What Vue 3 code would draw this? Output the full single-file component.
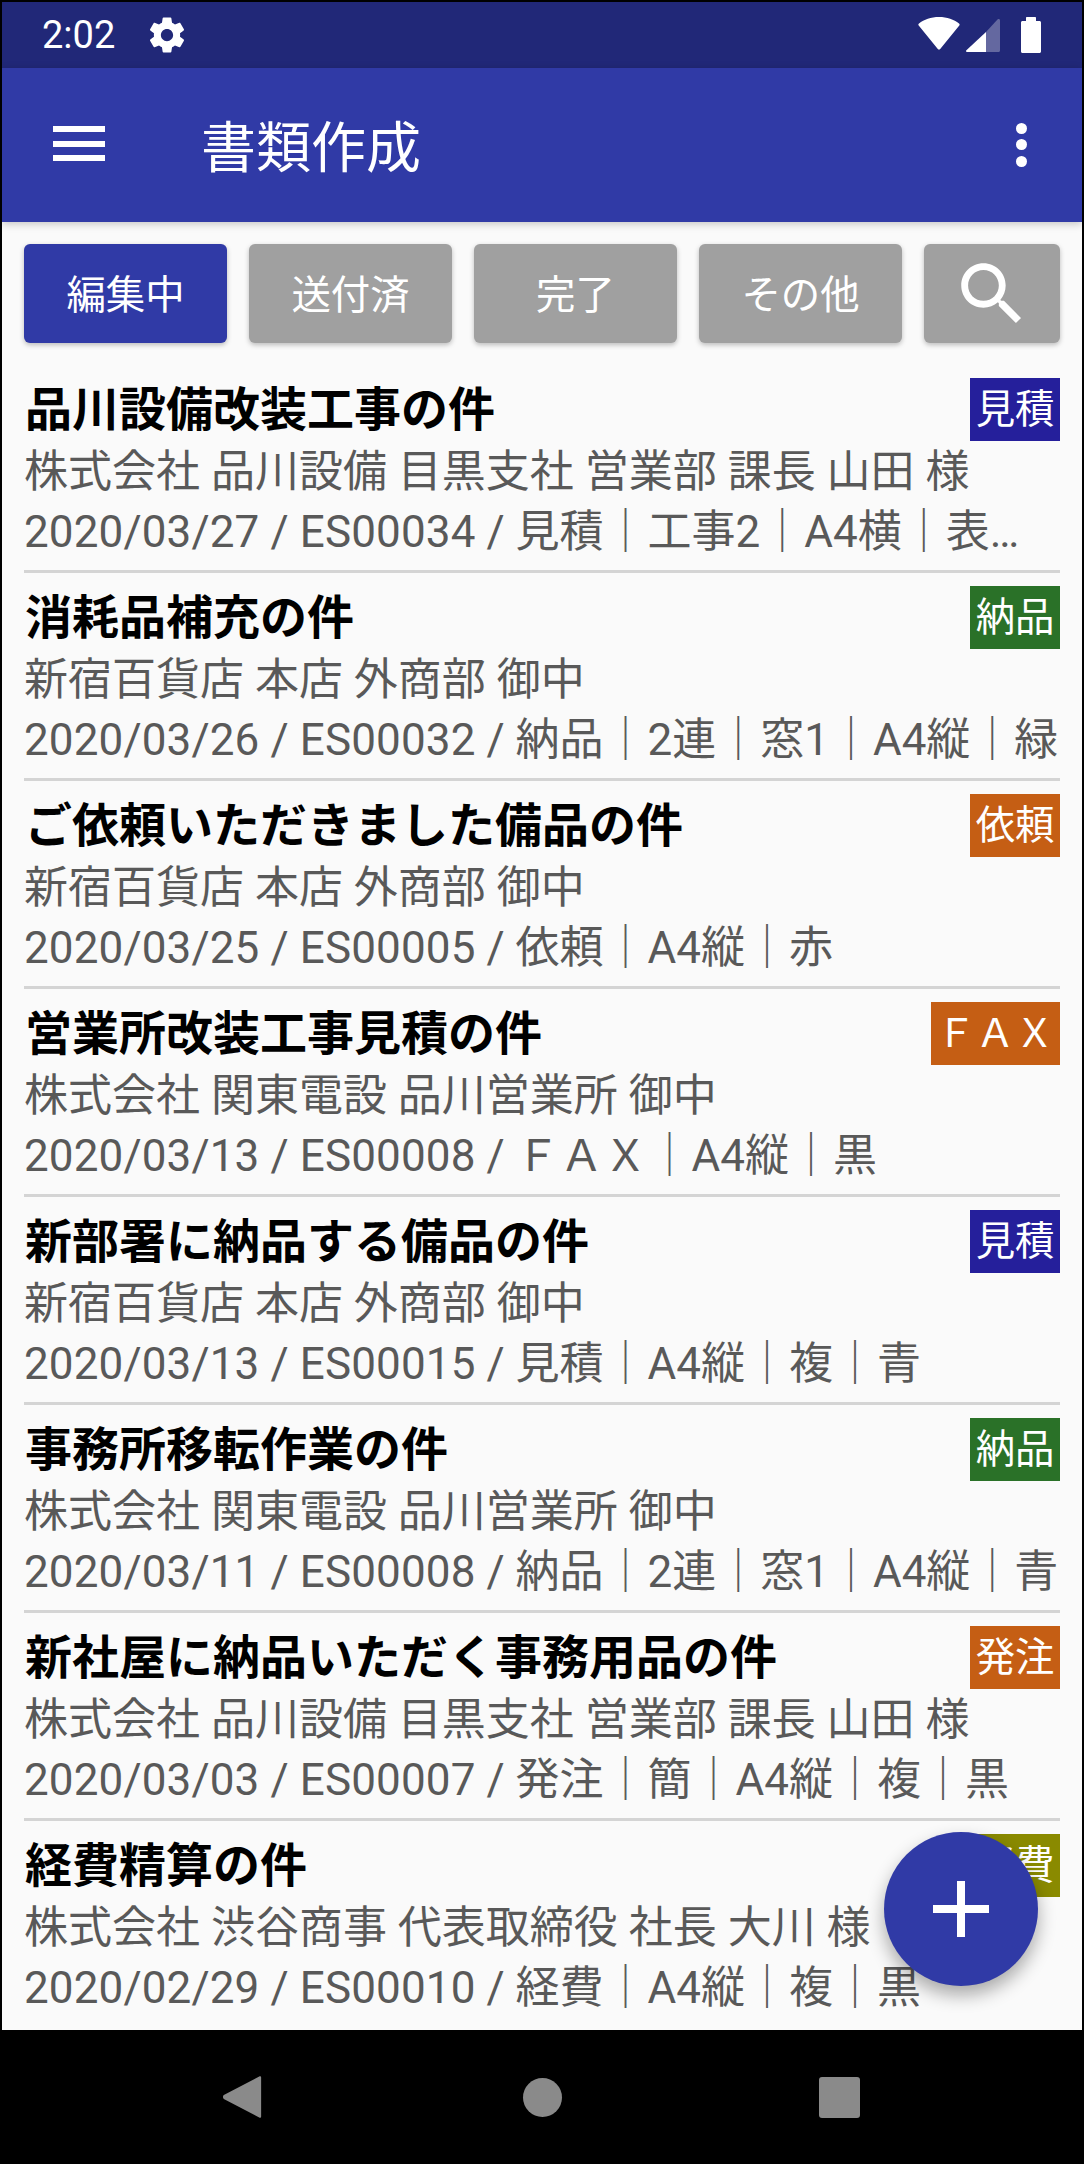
<template>
  <div class="screen">
    <div class="status-bar">
      <span class="time">2:02</span>
      <svg class="gear" viewBox="0 0 24 24"><path fill="#fff" d="M19.43 12.98c.04-.32.07-.64.07-.98s-.03-.66-.07-.98l2.11-1.65c.19-.15.24-.42.12-.64l-2-3.46c-.12-.22-.39-.3-.61-.22l-2.49 1c-.52-.4-1.08-.73-1.69-.98l-.38-2.65C14.46 2.18 14.25 2 14 2h-4c-.25 0-.46.18-.49.42l-.38 2.65c-.61.25-1.17.59-1.69.98l-2.49-1c-.23-.09-.49 0-.61.22l-2 3.46c-.13.22-.07.49.12.64l2.11 1.65c-.04.32-.07.65-.07.98s.03.66.07.98l-2.11 1.65c-.19.15-.24.42-.12.64l2 3.46c.12.22.39.3.61.22l2.49-1c.52.4 1.08.73 1.69.98l.38 2.65c.03.24.24.42.49.42h4c.25 0 .46-.18.49-.42l.38-2.65c.61-.25 1.17-.59 1.69-.98l2.49 1c.23.09.49 0 .61-.22l2-3.46c.12-.22.07-.49-.12-.64l-2.11-1.65zM12 15.5c-1.93 0-3.5-1.57-3.5-3.5s1.57-3.5 3.5-3.5 3.5 1.57 3.5 3.5-1.57 3.5-3.5 3.5z"/></svg>
      <span class="spacer"></span>
      <svg class="wifi" viewBox="0 0 42 33"><path fill="#fff" d="M21 0C13 0 6 2.5 1 6.500c-.8.6-.8 1.400-.3 2.100L19.800 32c.6.7 1.800.7 2.400 0L41.300 8.600c.5-.7.5-1.500-.3-2.100C36 2.500 29 0 21 0z"/></svg>
      <svg class="signal" viewBox="0 0 34 34"><path fill="#fff" fill-opacity="0.3" d="M20 14 31.500 1.500c1-.9 2.500-.5 2.500 1V32.500c0 .8-.6 1.500-1.500 1.500H20z"/><path fill="#fff" d="M20 14V34H1.200c-1 0-1.500-1.100-.8-1.800z"/></svg>
      <svg class="battery" viewBox="0 0 20 36"><path fill="#fff" d="M6 0h8c.6 0 1 .4 1 1v3h3.500c.8 0 1.500.7 1.500 1.500v29c0 .8-.7 1.500-1.500 1.500H1.500C.7 36 0 35.300 0 34.500v-29C0 4.700.7 4 1.500 4H5V1c0-.6.4-1 1-1z"/></svg>
    </div>

    <div class="app-bar">
      <div class="menu-icon"><i></i><i></i><i></i></div>
      <h1>書類作成</h1>
      <span class="spacer"></span>
      <div class="more-icon"><i></i><i></i><i></i></div>
    </div>

    <div class="content">
      <div class="tabs">
        <button v-for="t in tabs" :key="t" class="tab" :class="{ active: t === '編集中' }">{{ t }}</button>
        <button class="tab search">
          <svg viewBox="0 0 24 24"><path fill="#fff" d="M15.500 14h-.79l-.28-.27C15.410 12.590 16 11.110 16 9.500 16 5.910 13.090 3 9.500 3S3 5.910 3 9.500 5.910 16 9.500 16c1.610 0 3.090-.59 4.230-1.570l.27.28v.79l5 4.990L20.490 19l-4.990-5zm-6 0C7.010 14 5 11.990 5 9.500S7.010 5 9.500 5 14 7.010 14 9.500 11.990 14 9.500 14z"/></svg>
        </button>
      </div>

      <div class="list">
        <div v-for="(doc, i) in docs" :key="i" class="doc">
          <div class="doc-head">
            <div class="doc-title">{{ doc.title }}</div>
            <span class="badge" :class="doc.color">{{ doc.badge }}</span>
          </div>
          <div class="doc-to">{{ doc.to }}</div>
          <div class="doc-meta"><span class="doc-no">{{ doc.no }}</span> / {{ doc.meta }}</div>
        </div>
      </div>

      <button class="fab">
        <svg viewBox="0 0 24 24"><path fill="#fff" d="M19 13h-6v6h-2v-6H5v-2h6V5h2v6h6v2z"/></svg>
      </button>
    </div>

    <div class="nav-bar">
      <svg class="nav-back" viewBox="0 0 40 46"><path fill="#8a8a8a" d="M38 1.500c1-.6 2 0 2 1.200v40.600c0 1.200-1 1.800-2 1.200L1 25c-1.200-.8-1.200-3.200 0-4z"/></svg>
      <span class="nav-home"></span>
      <span class="nav-recent"></span>
    </div>
  </div>
</template>

<script setup>
const tabs = ['編集中', '送付済', '完了', 'その他']

const docs = [
  { title: '品川設備改装工事の件', badge: '見積', color: 'navy', to: '株式会社 品川設備 目黒支社 営業部 課長 山田 様', no: '2020/03/27 / ES00034', meta: '見積｜工事2｜A4横｜表…' },
  { title: '消耗品補充の件', badge: '納品', color: 'green', to: '新宿百貨店 本店 外商部 御中', no: '2020/03/26 / ES00032', meta: '納品｜2連｜窓1｜A4縦｜緑' },
  { title: 'ご依頼いただきました備品の件', badge: '依頼', color: 'orange', to: '新宿百貨店 本店 外商部 御中', no: '2020/03/25 / ES00005', meta: '依頼｜A4縦｜赤' },
  { title: '営業所改装工事見積の件', badge: 'ＦＡＸ', color: 'orange', to: '株式会社 関東電設 品川営業所 御中', no: '2020/03/13 / ES00008', meta: 'ＦＡＸ｜A4縦｜黒' },
  { title: '新部署に納品する備品の件', badge: '見積', color: 'navy', to: '新宿百貨店 本店 外商部 御中', no: '2020/03/13 / ES00015', meta: '見積｜A4縦｜複｜青' },
  { title: '事務所移転作業の件', badge: '納品', color: 'green', to: '株式会社 関東電設 品川営業所 御中', no: '2020/03/11 / ES00008', meta: '納品｜2連｜窓1｜A4縦｜青' },
  { title: '新社屋に納品いただく事務用品の件', badge: '発注', color: 'orange', to: '株式会社 品川設備 目黒支社 営業部 課長 山田 様', no: '2020/03/03 / ES00007', meta: '発注｜簡｜A4縦｜複｜黒' },
  { title: '経費精算の件', badge: '経費', color: 'olive', to: '株式会社 渋谷商事 代表取締役 社長 大川 様', no: '2020/02/29 / ES00010', meta: '経費｜A4縦｜複｜黒' },
]
</script>

<style>
html, body {
  margin: 0;
  background: #000;
}
</style>

<style scoped>
.screen {
  width: 1084px;
  height: 2164px;
  box-sizing: border-box;
  padding: 2px 2px 0;
  background: #000;
  display: flex;
  flex-direction: column;
  font-family: Roboto, "Noto Sans CJK JP", sans-serif;
  overflow: hidden;
}

.spacer {
  flex: 1;
}

.status-bar {
  height: 66px;
  background: #212878;
  display: flex;
  align-items: center;
  color: #fff;
  flex-shrink: 0;
}

.time {
  margin-left: 40px;
  font-size: 38px;
  line-height: 66px;
}

.gear {
  width: 42px;
  height: 42px;
  margin-left: 31px;
}

.wifi {
  width: 42px;
  height: 33px;
  margin-right: 6px;
  margin-bottom: 4px;
}

.signal {
  width: 34px;
  height: 34px;
  margin-right: 21px;
}

.battery {
  width: 20px;
  height: 36px;
  margin-right: 41px;
}

.app-bar {
  height: 154px;
  background: #303aa6;
  display: flex;
  align-items: center;
  color: #fff;
  flex-shrink: 0;
  position: relative;
  z-index: 1;
  box-shadow: 0 2px 8px rgba(0, 0, 0, 0.22);
}

.menu-icon {
  width: 52px;
  margin-left: 51px;
  margin-bottom: 3px;
  display: flex;
  flex-direction: column;
  gap: 8.5px;
}

.menu-icon i {
  height: 6px;
  background: #fff;
}

h1 {
  margin: 0 0 0 96px;
  padding-top: 6px;
  font-size: 55px;
  font-weight: 400;
  line-height: 70px;
}

.more-icon {
  margin-right: 55px;
  margin-bottom: 1px;
  display: flex;
  flex-direction: column;
  gap: 5.5px;
}

.more-icon i {
  width: 11px;
  height: 11px;
  border-radius: 50%;
  background: #fff;
}

.content {
  flex: 1;
  background: #fafafa;
  position: relative;
  overflow: hidden;
  padding: 22px 22px 0;
}

.tabs {
  display: flex;
  gap: 22px;
}

.tab {
  width: 203px;
  height: 99px;
  border: none;
  border-radius: 6px;
  padding: 0 0 4px;
  background: #a0a0a0;
  color: #fff;
  font-family: inherit;
  font-size: 39.4px;
  box-shadow: 0 2px 5px rgba(0, 0, 0, 0.25);
}

.tab.active {
  background: #303aa6;
}

.tab.search {
  width: 136px;
  padding: 0;
  display: flex;
  align-items: center;
  justify-content: center;
}

.tab.search svg {
  width: 82px;
  height: 82px;
}

.list {
  margin-top: 35px;
}

.doc {
  height: 192px;
  margin-bottom: 13px;
  border-bottom: 3px solid #d4d4d4;
}

.doc:last-child {
  border-bottom: none;
}

.doc-head {
  display: flex;
  justify-content: space-between;
  align-items: flex-start;
  height: 65px;
}

.doc-title {
  font-size: 47px;
  font-weight: 700;
  line-height: 63px;
  color: #000;
  margin-left: 1px;
}

.badge {
  height: 63px;
  box-sizing: border-box;
  text-align: center;
  padding: 0 5.6px;
  color: #fff;
  font-size: 39.4px;
  line-height: 63px;
}

.navy { background: #251f9b; }
.green { background: #2a7128; }
.orange { background: #c55e14; }
.olive { background: #8a8a00; }

.doc-to,
.doc-meta {
  font-size: 44px;
  color: #595959;
  white-space: nowrap;
}

.doc-to {
  line-height: 59px;
}

.doc-meta {
  line-height: 60px;
}

.doc-no {
  letter-spacing: 0.13px;
}

.fab {
  position: absolute;
  left: 882px;
  top: 1610px;
  width: 154px;
  height: 154px;
  border: none;
  border-radius: 50%;
  padding: 0;
  background: #303aa6;
  box-shadow: 0 9px 18px rgba(0, 0, 0, 0.33);
  display: flex;
  align-items: center;
  justify-content: center;
}

.fab svg {
  width: 96px;
  height: 96px;
}

.nav-bar {
  height: 134px;
  background: #000;
  display: flex;
  align-items: center;
  position: relative;
  flex-shrink: 0;
}

.nav-back {
  width: 40px;
  height: 44px;
  margin-left: 220px;
}

.nav-home {
  width: 39px;
  height: 39px;
  border-radius: 50%;
  background: #8a8a8a;
  margin-left: 261px;
}

.nav-recent {
  width: 41px;
  height: 41px;
  border-radius: 3px;
  background: #8a8a8a;
  margin-left: 257px;
}
</style>
